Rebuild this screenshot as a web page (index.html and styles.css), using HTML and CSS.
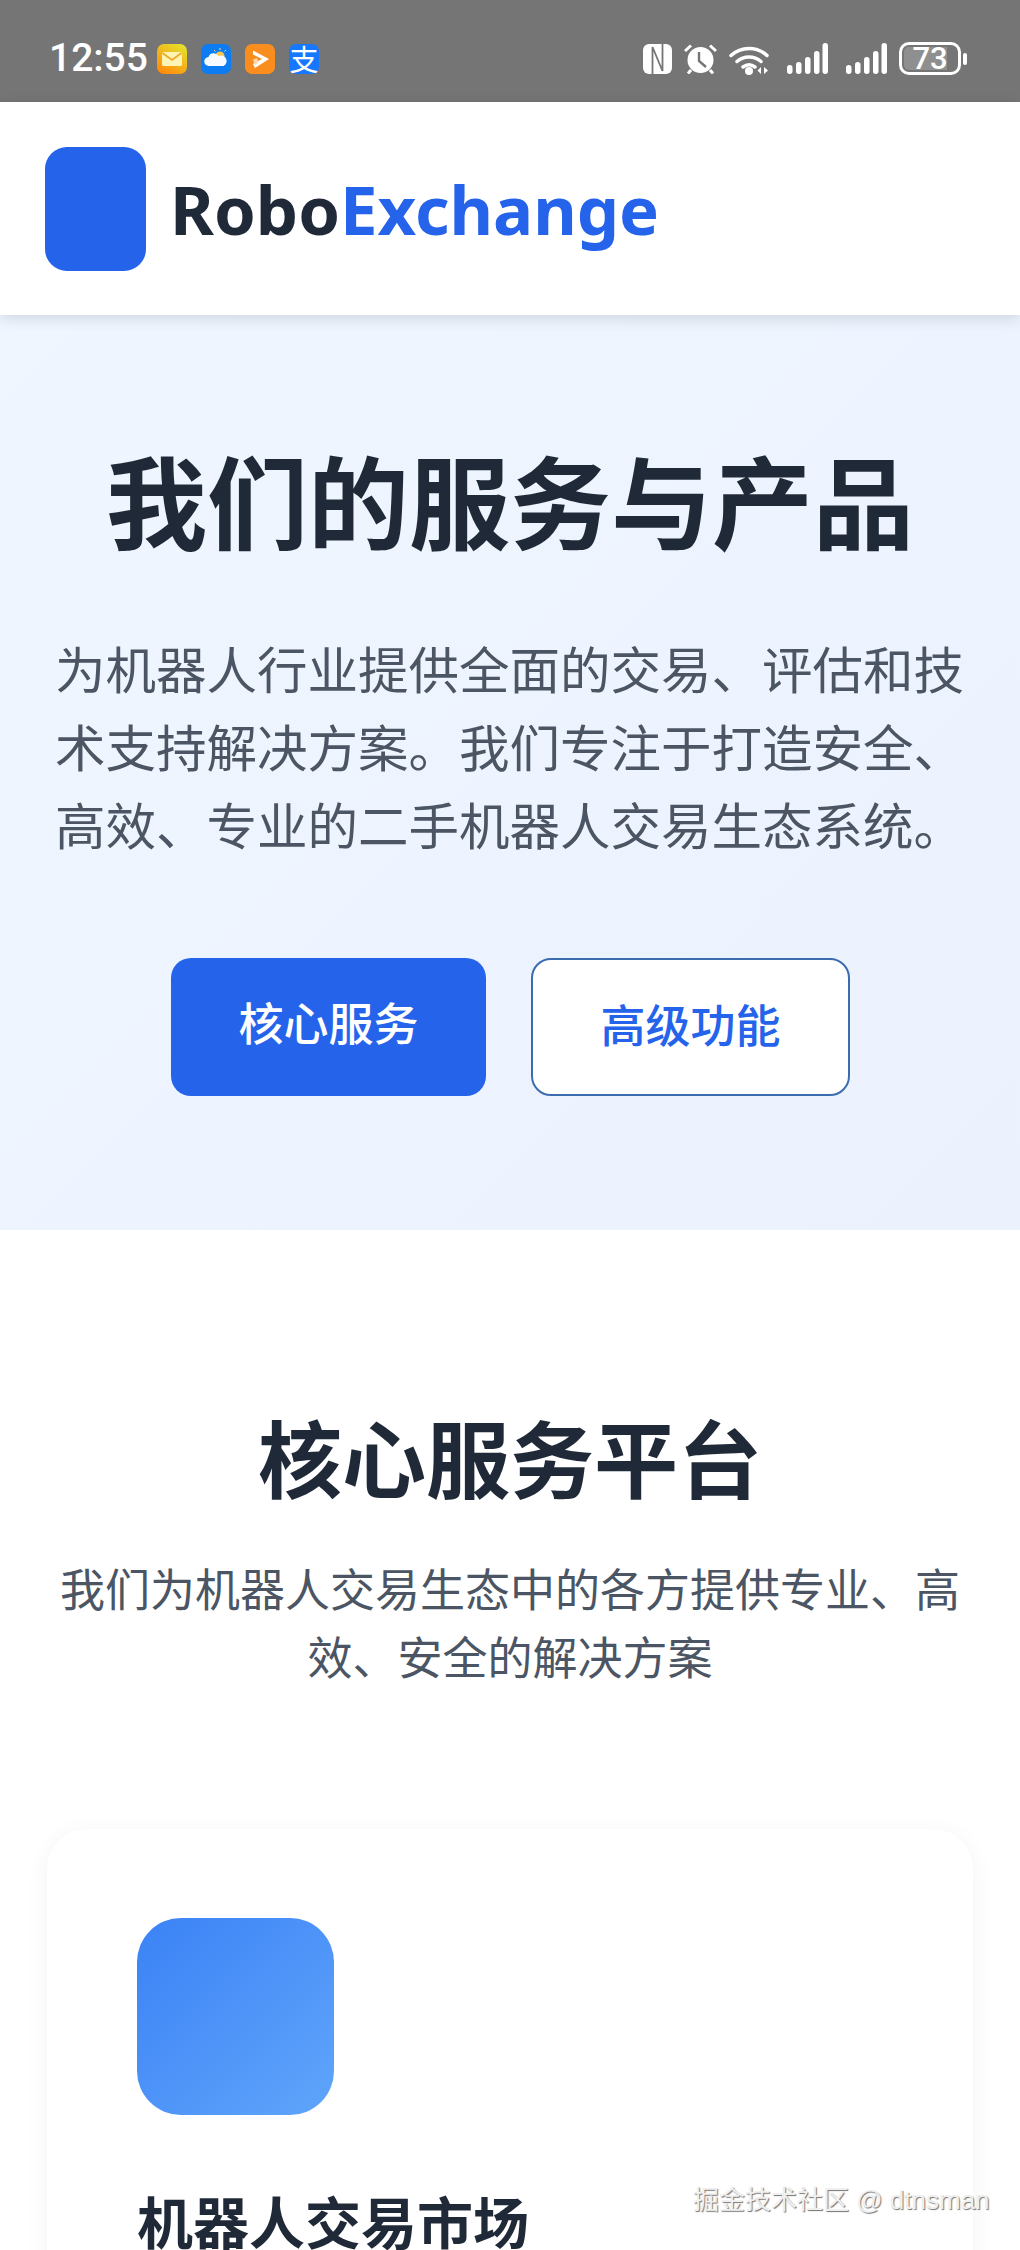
FILE: index.html
```html
<!DOCTYPE html>
<html lang="zh-CN">
<head>
    <meta charset="UTF-8">
    <meta name="viewport" content="width=device-width, initial-scale=1.0">
    <title>RoboExchange</title>
    <link rel="stylesheet" href="styles.css">
</head>
<body>
    <div class="status-bar">
        <div class="status-left">
            <span class="time">12:55</span>
            <svg class="app-icon" viewBox="0 0 30 30">
                <defs><linearGradient id="mailBg" x1="0.8" y1="0" x2="0.2" y2="1"><stop offset="0" stop-color="#e4e02c"/><stop offset="1" stop-color="#ff8a0a"/></linearGradient></defs>
                <rect width="30" height="30" rx="7" fill="url(#mailBg)"/>
                <rect x="5" y="8" width="20" height="14" rx="1.5" fill="#fdf3b4"/>
                <path d="M5.500 9 L15 16 L24.500 9" fill="none" stroke="#f0a81e" stroke-width="1.6"/>
            </svg>
            <svg class="app-icon" viewBox="0 0 30 30">
                <rect width="30" height="30" rx="7" fill="#0d7cf2"/>
                <circle cx="19" cy="12" r="4.500" fill="#f4c64f"/>
                <path d="M19 4v2M25 6l-1.500 1.500M13 6l1.500 1.500" stroke="#f4d88a" stroke-width="1" fill="none"/>
                <path d="M8 22a4.500 4.500 0 0 1-.5-9 5.500 5.500 0 0 1 10-1 5 5 0 0 1 5 10z" fill="#f6fafe"/>
            </svg>
            <svg class="app-icon" viewBox="0 0 30 30">
                <rect width="30" height="30" rx="7" fill="#f98e1f"/>
                <path d="M8 6.500 L24 15 L10 24 L8 20 L17 15 L8 10.500z" fill="#fff"/>
                <path d="M8 15.500 L12 14 L13.500 18.500 L10 21z" fill="#fcd9ae"/>
            </svg>
            <span class="app-icon alipay">支</span>
        </div>
        <div class="status-right">
            <svg class="nfc" viewBox="0 0 29 30">
                <rect width="29" height="30" rx="6" fill="#fff"/>
                <path d="M9.500 30V3L19.500 27V0" fill="none" stroke="#757575" stroke-width="1.800"/>
            </svg>
            <svg class="alarm" viewBox="0 0 33 30">
                <circle cx="16.500" cy="16" r="13" fill="#fff"/>
                <path d="M15 8v9l7 6" fill="none" stroke="#757575" stroke-width="2.400"/>
                <path d="M1 7L7 1.500M32 7L26 1.500M7 26l-3 3.500M26 26l3 3.500" stroke="#fff" stroke-width="3" fill="none"/>
            </svg>
            <svg class="wifi" viewBox="0 0 41 32">
                <path d="M2 12.500C12 3 28 3 38 12.500M8 18.500c7-6 17-6 24 0M14 24c4-3 8-3 12 0" fill="none" stroke="#fff" stroke-width="3.500" stroke-linecap="round"/>
                <circle cx="20" cy="28" r="4" fill="#fff"/>
                <path d="M32 24v7l-3.500-3.500zM35 24v7l4-3.500z" fill="#fff"/>
            </svg>
            <svg class="signal" viewBox="0 0 41 31">
                <rect x="0" y="22" width="5.500" height="9" rx="2.700" fill="#fff"/>
                <rect x="9" y="19" width="5.500" height="12" rx="2.700" fill="#fff"/>
                <rect x="18" y="14" width="5.500" height="17" rx="2.700" fill="#fff"/>
                <rect x="27" y="8" width="5.500" height="23" rx="2.700" fill="#fff"/>
                <rect x="35.500" y="0" width="5.500" height="31" rx="2.700" fill="#fff"/>
            </svg>
            <svg class="signal" viewBox="0 0 41 31">
                <rect x="0" y="22" width="5.500" height="9" rx="2.700" fill="#fff"/>
                <rect x="9" y="19" width="5.500" height="12" rx="2.700" fill="#fff"/>
                <rect x="18" y="14" width="5.500" height="17" rx="2.700" fill="#fff"/>
                <rect x="27" y="8" width="5.500" height="23" rx="2.700" fill="#fff"/>
                <rect x="35.500" y="0" width="5.500" height="31" rx="2.700" fill="#fff"/>
            </svg>
            <div class="battery"><span class="battery-level">73</span></div>
            <span class="battery-nub"></span>
        </div>
    </div>

    <header class="site-header">
        <div class="logo-mark"></div>
        <div class="logo-text">Robo<span class="logo-accent">Exchange</span></div>
    </header>

    <section class="hero">
        <h1>我们的服务与产品</h1>
        <p>为机器人行业提供全面的交易、评估和技术支持解决方案。我们专注于打造安全、高效、专业的二手机器人交易生态系统。</p>
        <div class="hero-buttons">
            <a class="btn btn-primary">核心服务</a>
            <a class="btn btn-outline">高级功能</a>
        </div>
    </section>

    <section class="services">
        <h2>核心服务平台</h2>
        <p class="services-sub">我们为机器人交易生态中的各方提供专业、高效、安全的解决方案</p>
        <div class="card">
            <div class="card-icon"></div>
            <h3>机器人交易市场</h3>
        </div>
    </section>

    <div class="watermark">掘金技术社区 @ dtnsman</div>
</body>
</html>
```

FILE: styles.css
```css
html, body {
    margin: 0;
    padding: 0;
}
body {
    position: relative;
    height: 2250px;
    overflow: hidden;
    background: white;
    color: #1f2937;
    font-family: "Noto Sans", "Noto Sans CJK SC", sans-serif;
}
.status-bar {
    height: 102px;
    box-sizing: border-box;
    padding: 42px 53px 0 49px;
    background-color: #757575;
    display: flex;
    justify-content: space-between;
    align-items: flex-start;
}
.status-left, .status-right {
    display: flex;
    align-items: center;
    height: 33px;
}
.time {
    font-family: Roboto, sans-serif;
    font-size: 39px;
    font-weight: 500;
    line-height: 33px;
    color: white;
    width: 108px;
}
.app-icon {
    display: block;
    width: 30px;
    height: 30px;
    margin-right: 14px;
}
.alipay {
    background-color: #1677ff;
    border-radius: 7px;
    color: white;
    font-family: "Noto Sans CJK SC", sans-serif;
    font-size: 29px;
    line-height: 29px;
    text-align: center;
}
.nfc {
    width: 29px;
    height: 30px;
    margin-right: 12px;
}
.alarm {
    width: 33px;
    height: 30px;
    margin-right: 12px;
}
.wifi {
    width: 41px;
    height: 32px;
    margin-right: 17px;
}
.signal {
    width: 41px;
    height: 31px;
    margin-right: 18px;
}
.status-right .signal:nth-of-type(5) {
    margin-right: 12px;
}
.battery {
    width: 62px;
    height: 33px;
    box-sizing: border-box;
    border: 3px solid white;
    border-radius: 10px;
    padding: 2px;
}
.battery-level {
    display: block;
    height: 23px;
    border-radius: 5px;
    background: linear-gradient(90deg, #8f8f8f 0, #8f8f8f 82%, transparent 82%);
    color: white;
    font-family: Roboto, sans-serif;
    font-size: 31px;
    font-weight: 500;
    line-height: 24px;
    text-align: center;
}
.battery-nub {
    width: 4px;
    height: 12px;
    margin-left: 2px;
    background-color: white;
    border-radius: 2px;
}
.site-header {
    height: 213px;
    box-sizing: border-box;
    padding-left: 45px;
    display: flex;
    align-items: center;
    gap: 24px;
    background: white;
    box-shadow: 0 4px 14px rgba(0,0,0,0.12);
    position: relative;
}
.logo-mark {
    width: 101px;
    height: 124px;
    margin-top: 1px;
    background-color: #2563eb;
    border-radius: 22px;
}
.logo-text {
    margin-top: 1px;
    font-size: 67px;
    font-weight: 700;
    line-height: 1;
    color: #1f2937;
}
.logo-accent {
    color: #2563eb;
}
.hero {
    height: 915px;
    box-sizing: border-box;
    padding: 130px 55px 0;
    background: linear-gradient(135deg, #eff6ff, #ebf2fe);
    text-align: center;
}
.hero h1 {
    margin: 0;
    font-size: 101px;
    line-height: 116px;
    font-weight: 700;
    color: #1f2937;
}
.hero p {
    margin: 70px 0 0;
    font-size: 50.500px;
    line-height: 78px;
    color: #4b5563;
    text-align: left;
}
.hero-buttons {
    margin-top: 93px;
    padding-left: 1px;
    display: flex;
    justify-content: center;
    gap: 45px;
}
.btn {
    display: block;
    box-sizing: border-box;
    height: 138px;
    border-radius: 20px;
    font-size: 45px;
    font-weight: 500;
    line-height: 132px;
    text-align: center;
}
.btn-primary {
    width: 315px;
    background-color: #2563eb;
    color: white;
}
.btn-outline {
    width: 319px;
    background-color: white;
    border: 2px solid #3b6cb0;
    color: #2563eb;
}
.services {
    padding: 172px 47px 0;
    text-align: center;
}
.services h2 {
    margin: 0;
    font-size: 84px;
    line-height: 116px;
    font-weight: 700;
    color: #1f2937;
}
.services-sub {
    margin: 38px 0 0;
    font-size: 45px;
    line-height: 68px;
    color: #4b5563;
}
.card {
    margin-top: 137px;
    height: 700px;
    box-sizing: border-box;
    padding: 89px 90px 0;
    background: white;
    border-radius: 40px;
    box-shadow: 0 4px 24px rgba(0,0,0,0.05);
    text-align: left;
}
.card-icon {
    width: 197px;
    height: 197px;
    border-radius: 44px;
    background: linear-gradient(135deg, #3b82f6, #60a5fa);
}
.card h3 {
    margin: 80px 0 0;
    font-size: 56px;
    line-height: 54px;
    font-weight: 700;
    color: #1f2937;
}
.watermark {
    position: absolute;
    left: 693px;
    top: 2182px;
    font-family: "Liberation Sans", "Noto Sans CJK SC", sans-serif;
    font-size: 26px;
    line-height: 36px;
    color: #f0f0f0;
    text-shadow: 1px 1px 1px rgba(0,0,0,0.55);
    white-space: nowrap;
}
```
